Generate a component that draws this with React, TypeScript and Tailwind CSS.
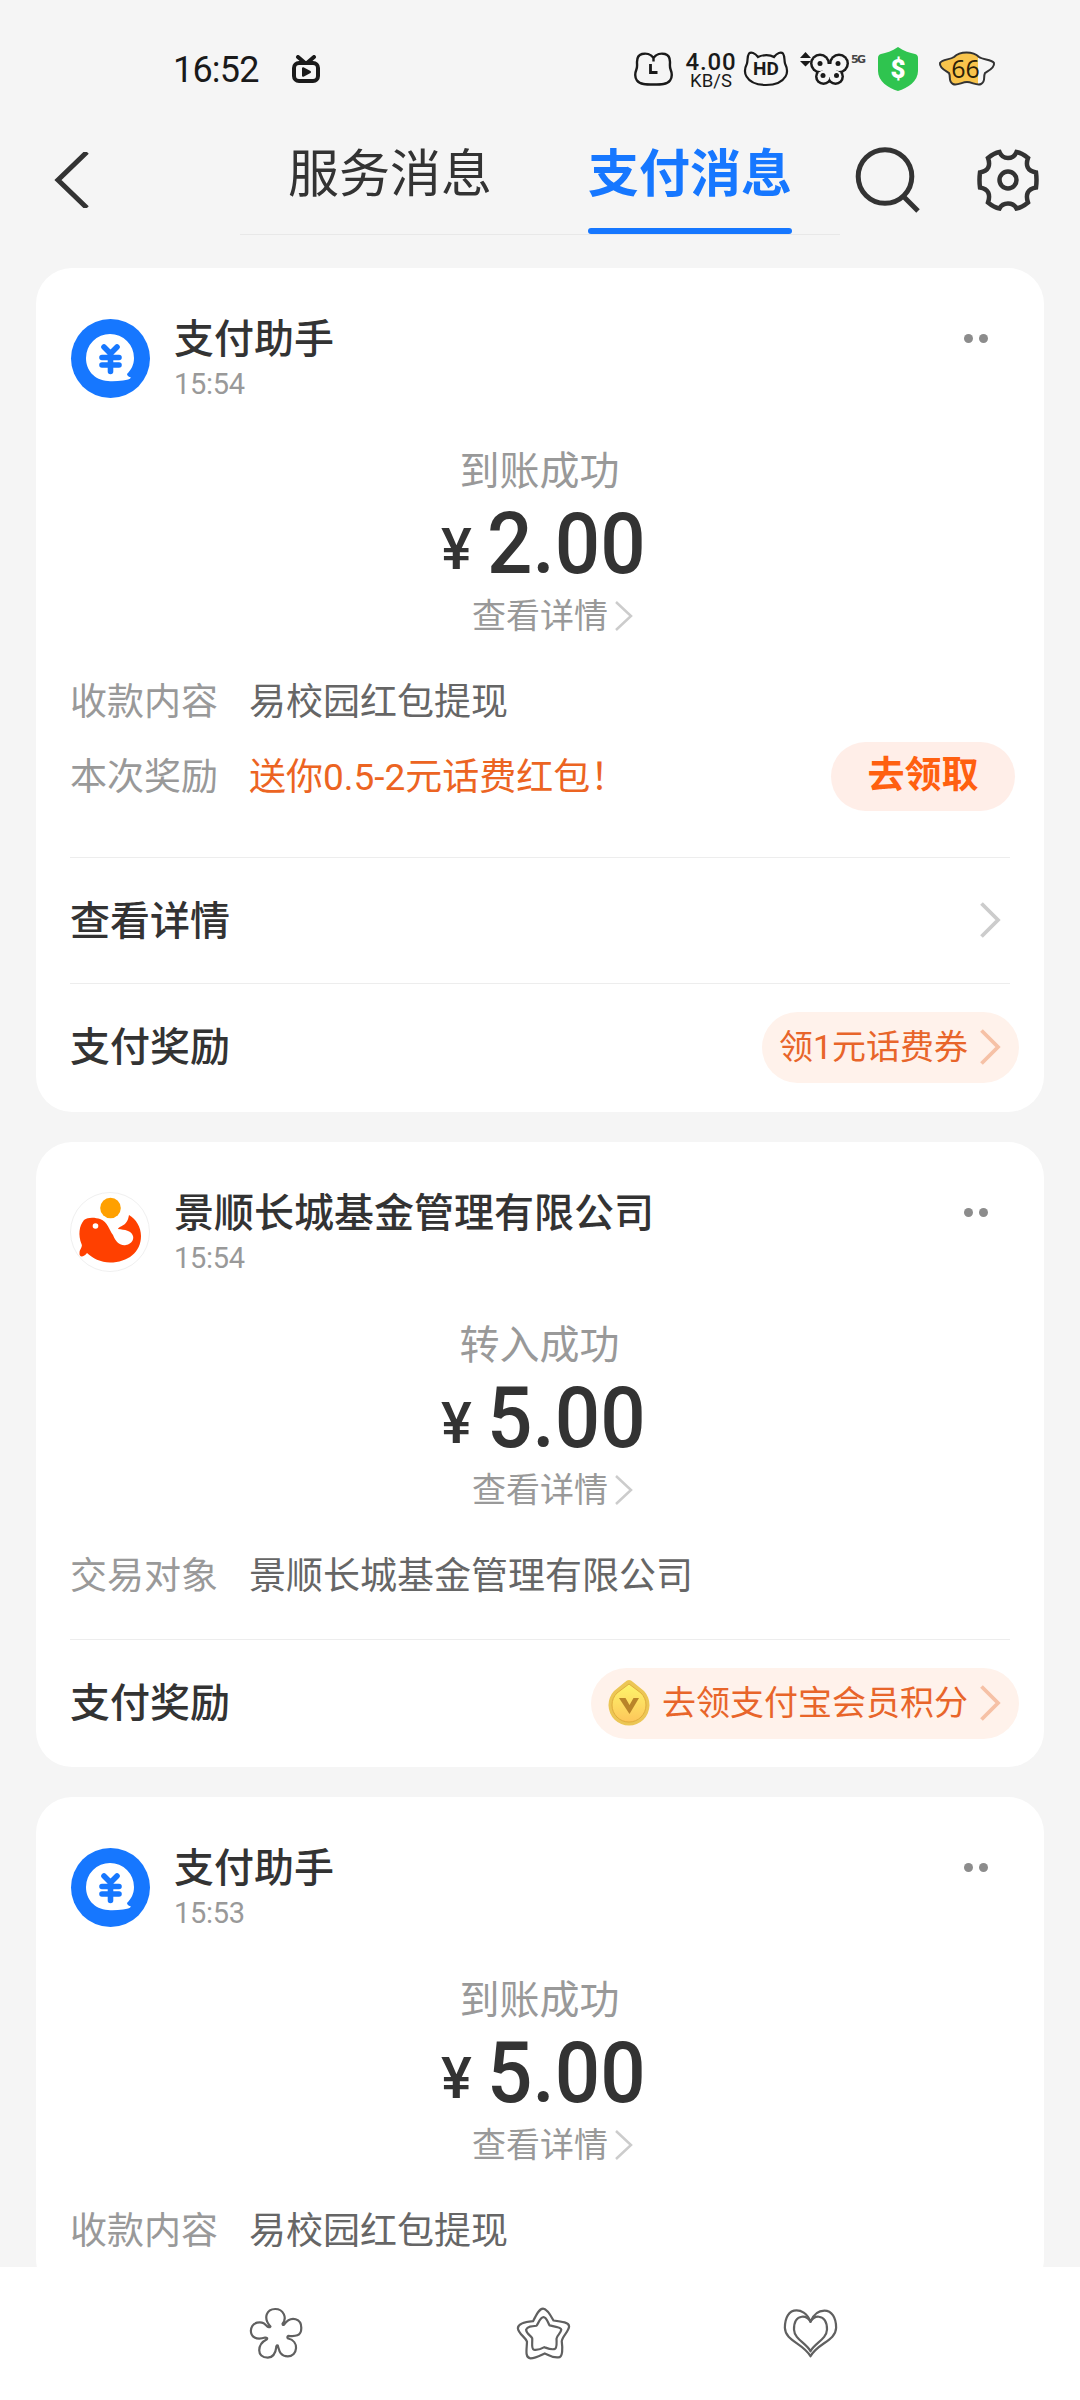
import type { ReactNode } from "react";

type Row = { label: string; value: string; highlight?: boolean; action?: string };
type Link = { title: string; pill?: string; coin?: boolean };
type Message = {
  sender: string;
  time: string;
  avatar: "pay" | "fund";
  status: string;
  amount: string;
  rows: Row[];
  links: Link[];
};

const messages: Message[] = [
  {
    sender: "支付助手",
    time: "15:54",
    avatar: "pay",
    status: "到账成功",
    amount: "2.00",
    rows: [
      { label: "收款内容", value: "易校园红包提现" },
      { label: "本次奖励", value: "送你0.5-2元话费红包！", highlight: true, action: "去领取" },
    ],
    links: [{ title: "查看详情" }, { title: "支付奖励", pill: "领1元话费券" }],
  },
  {
    sender: "景顺长城基金管理有限公司",
    time: "15:54",
    avatar: "fund",
    status: "转入成功",
    amount: "5.00",
    rows: [{ label: "交易对象", value: "景顺长城基金管理有限公司" }],
    links: [{ title: "支付奖励", pill: "去领支付宝会员积分", coin: true }],
  },
  {
    sender: "支付助手",
    time: "15:53",
    avatar: "pay",
    status: "到账成功",
    amount: "5.00",
    rows: [{ label: "收款内容", value: "易校园红包提现" }],
    links: [],
  },
];

const BATTERY =
  "M16 6c6-6 19-6 25 0 4 3 13 2 15 6 1 5-6 8-9 10-2 4 1 9-4 11-4 2-9-2-14-2s-10 4-14 2c-5-2-2-7-4-11C8 20 1 17 2 12c2-4 10-3 14-6z";

function StatusBar() {
  return (
    <div className="flex h-[110px] items-center pt-[28px] pl-[173px] text-[#1a1a1a]">
      <div className="flex w-[461px] items-center">
        <span className="mt-0.5 w-[119px] text-[36px] leading-[44px] tracking-[-0.8px]">16:52</span>
        <svg width="28" height="28" viewBox="0 0 28 28" fill="none" stroke="#1a1a1a" strokeWidth="4" strokeLinecap="round">
          <path d="M6 2l7 6M22 2l-7 6" />
          <rect x="2" y="8" width="24" height="18" rx="5" />
          <path d="M11 13.2v7.6l7-3.8z" fill="#1a1a1a" strokeWidth="2" strokeLinejoin="round" />
        </svg>
      </div>

      <svg className="mr-3" width="39" height="34" viewBox="0 0 39 34" fill="none" stroke="#1a1a1a" strokeWidth="2.4">
        <path d="M19.500 9.500V6C22 2 27 1 31 2c4 1 5 4 5 8 0 3-.5 5 .6 7.500C38 21 38.500 25 36 28.500 33 32.500 27 32.500 19.500 32.500S6 32.500 3 28.500C.5 25 1 21 2.400 17.500 3.500 15 3 13 3 10c0-4 1-7 5-8s9 0 11.500 4" />
        <path d="M16.500 12v8.500h7" strokeWidth="2.800" />
      </svg>

      <div className="mr-[6px] flex w-[52px] flex-col items-center pt-[3px]">
        <span className="text-[24px] font-medium leading-[20px] tracking-[0.8px]">4.00</span>
        <span className="text-[18.500px] leading-[18px]">KB/S</span>
      </div>

      <svg className="mr-[11px]" width="46" height="36" viewBox="0 0 46 36" fill="none" stroke="#1a1a1a" strokeWidth="2.200">
        <path d="M15 6c5-2.500 12-2.500 16 0C34 2 38 .5 40 2.500c2 3 1 6 2 10 2 4 3 9 .5 13C39 31.500 31 34 23 34S7 31.500 3.500 25.500C1 21.500 2 16.500 4 12.500c1-4 0-7 2-10C8 .5 12 2 15 6z" />
        <text x="23" y="24" textAnchor="middle" fontSize="19" fontWeight="700" fill="#1a1a1a" stroke="none" fontFamily="Roboto">
          HD
        </text>
      </svg>

      <svg className="mr-[11px]" width="67" height="36" viewBox="0 0 67 36">
        <path d="M0 7l5.500-6L11 7zM0 10h11L5.500 15.500z" fill="#1a1a1a" />
        <g fill="#1a1a1a">
          <circle cx="20" cy="12.500" r="10" />
          <circle cx="39" cy="12.500" r="10" />
          <circle cx="23.500" cy="25.500" r="8.500" />
          <circle cx="35.500" cy="25.500" r="8.500" />
        </g>
        <g fill="#f5f5f5">
          <circle cx="20" cy="12.500" r="7.500" />
          <circle cx="39" cy="12.500" r="7.500" />
          <circle cx="23.500" cy="25.500" r="6" />
          <circle cx="35.500" cy="25.500" r="6" />
          <path d="M22 13h15l-1 10-4 3h-5l-4-3z" />
        </g>
        <g fill="#1a1a1a">
          <circle cx="20" cy="12.500" r="2.500" />
          <circle cx="38" cy="12.500" r="2.500" />
          <circle cx="23" cy="24.500" r="2.500" />
          <circle cx="36.500" cy="24.500" r="2.500" />
        </g>
        <text x="51" y="12" fontSize="11" fontWeight="700" fill="#444" fontFamily="DejaVu Sans" textLength="15">
          5G
        </text>
      </svg>

      <svg className="mr-[20px]" width="40" height="44" viewBox="0 0 40 44">
        <path d="M20 0c6 4 12 6 17 7 2 .5 3 2 3 4v13c0 10-10 17-20 20C10 41 0 34 0 24V11c0-2 1-3.500 3-4 5-1 11-3 17-7z" fill="#2fc44f" />
        <text x="20" y="31" textAnchor="middle" fontSize="26" fontWeight="900" fill="#fff" fontFamily="Roboto">
          $
        </text>
      </svg>

      <svg width="58" height="36" viewBox="0 0 58 36">
        <defs>
          <clipPath id="charge">
            <rect width="40" height="36" />
          </clipPath>
        </defs>
        <path clipPath="url(#charge)" d={BATTERY} fill="#f8c44c" />
        <path d={BATTERY} fill="none" stroke="#333" strokeWidth="2" />
        <text x="27.500" y="27" textAnchor="middle" fontSize="25" fill="#2a2109" fontFamily="Open Sans">
          66
        </text>
      </svg>
    </div>
  );
}

function Header() {
  return (
    <div className="flex h-[158px] items-start">
      <svg className="mt-[42px] ml-[54px]" width="36" height="56" viewBox="0 0 36 56" fill="none" stroke="#333" strokeWidth="5">
        <path d="M33 0L4 28l29 28" />
      </svg>
      <div className="ml-[150px] flex h-[125px] w-[600px] border-b border-[#e8e8e8] text-[51px] leading-[70px]">
        <span className="mt-[30px] ml-[48px] w-[204px] text-[#333]">服务消息</span>
        <div className="ml-[96px] flex w-[204px] flex-col items-center justify-between font-bold text-[#1677ff]">
          <span className="mt-[30px]">支付消息</span>
          <span className="h-1.5 w-full rounded-full bg-[#1677ff]" />
        </div>
      </div>
      <svg className="mt-[36px] ml-[14px]" width="68" height="68" viewBox="0 0 68 68" fill="none" stroke="#333" strokeWidth="5">
        <circle cx="31" cy="30.500" r="26.800" />
        <path d="M50 51l14 14" />
      </svg>
      <svg className="mt-[38px] ml-[54px]" width="64" height="64" viewBox="-32 -32 64 64" fill="none" stroke="#333" strokeWidth="4.500">
        <path d="M-8.500-28C-6.500-23-3.500-22 0-22S6.500-23 8.500-28Q14-27 20-22C17.500-15 19-9 28-7.500Q29 0 28 7.500C19 9 17.500 15 20 22.500Q14 27.500 8.500 28.500C6.500 24.500 3.500 23.500 0 23.500S-6.500 24.500-8.500 28.500Q-14 27.500-20 22.500C-17.500 15-19 9-28 7.500Q-29 0-28-7.500C-19-9-17.500-15-20-22Q-14-27-8.500-28Z" />
        <circle r="8.500" />
      </svg>
    </div>
  );
}

function PayAvatar() {
  return (
    <svg width="80" height="80" viewBox="0 0 80 80">
      <circle cx="40.500" cy="40.500" r="39.500" fill="#1677ff" />
      <path d="M40 16a24 24 0 0 1 24 24c0 7-3 12-7 16 0 2 2 3 4 3.500-1 2-4 2.500-8 3-5 .5-10 1-15 .5C24 62 16 52 16 40a24 24 0 0 1 24-24z" fill="#fff" />
      <path d="M34 29l6.500 6.500L47 29M32 39.500h17M32 47h17M40.500 36v17.500" fill="none" stroke="#1677ff" strokeWidth="5.600" strokeLinecap="round" />
    </svg>
  );
}

function FundAvatar() {
  return (
    <svg width="80" height="80" viewBox="0 0 80 80">
      <circle cx="40" cy="40" r="39.500" fill="#fff" stroke="#f0f0f0" />
      <circle cx="40.500" cy="16" r="10.300" fill="#ffa000" />
      <path
        d="M14 28C18 24.500 26 25.500 30 27 38 30 39 38 43 43 46 51 51 54 56 53 62 52 64 47 63 44 61 38 55 38 48 37 50 33 57 35 59 23 66 27 71 35 71 44 71 60 58 70.500 40 70.500 31 70.500 22 66 17 61 14 65 9 66 9.500 61 9.500 57 13 55 11.500 52 8 43 9 34 14 28Z"
        fill="#ff4000"
      />
      <circle cx="25.500" cy="34" r="2.800" fill="#fff" />
    </svg>
  );
}

function Coin() {
  return (
    <svg className="mr-3" width="42" height="46" viewBox="0 0 42 46">
      <defs>
        <linearGradient id="coin" x1="0" y1="0" x2="0" y2="1">
          <stop offset="0" stopColor="#fdf56a" />
          <stop offset="1" stopColor="#fdc65a" />
        </linearGradient>
      </defs>
      <path d="M21 0q2 0 4 2l11 9a20.500 20.500 0 1 1-30 0l11-9q2-2 4-2z" fill="#ecc655" />
      <path d="M21 4l12 9a17 17 0 1 1-24 0z" fill="url(#coin)" stroke="#e0ad3c" />
      <path d="M11 18h6.500l4 7 4-7H31L21.500 34z" fill="#b98429" />
    </svg>
  );
}

function Chevron({ className, small }: { className: string; small?: boolean }) {
  return small ? (
    <svg className={className} width="18" height="30" viewBox="0 0 18 30" fill="none" stroke="currentColor" strokeWidth="2.500">
      <path d="M1 1l15 14L1 29" />
    </svg>
  ) : (
    <svg className={className} width="21" height="36" viewBox="0 0 21 36" fill="none" stroke="currentColor" strokeWidth="3.800">
      <path d="M1.500 1.500L18 18 1.500 34.500" />
    </svg>
  );
}

function MessageCard({ message }: { message: Message }) {
  return (
    <div className="shrink-0 rounded-[36px] bg-white pb-px last:grow">
      <div className="flex items-start pt-[50px] pl-[34px]">
        {message.avatar === "pay" ? <PayAvatar /> : <FundAvatar />}
        <div className="ml-6 flex flex-1 flex-col">
          <span className="text-[40px] font-medium leading-[44px] text-[#333]">{message.sender}</span>
          <span className="text-[29px] leading-[45px] tracking-[-0.3px] text-[#999]">{message.time}</span>
        </div>
        <div className="mt-4 mr-[56px] flex gap-1.5">
          <i className="size-[9px] rounded-full bg-[#8c8c8c]" />
          <i className="size-[9px] rounded-full bg-[#8c8c8c]" />
        </div>
      </div>

      <div className="mt-[37px] flex flex-col items-center">
        <span className="-ml-px text-[40px] leading-[56px] text-[#999]">{message.status}</span>
        <div className="flex h-[88px] items-baseline pl-[3px] text-[#333]">
          <span className="relative -top-1 mr-[15px] text-[58px] font-medium leading-[88px]">¥</span>
          <span className="w-[155px] origin-left scale-x-[0.93] text-[86px] font-medium leading-[88px]">{message.amount}</span>
        </div>
        <div className="flex h-[56px] items-center pb-px pl-[25px]">
          <span className="text-[34px] leading-[48px] text-[#999]">查看详情</span>
          <Chevron small className="ml-[7px] text-[#ccc]" />
        </div>
      </div>

      <div className="mt-[21px] pr-[29px] pl-[34px]">
        {message.rows.map((row) => (
          <div key={row.label} className="flex h-[75px] items-center text-[37px]">
            <span className="mr-[31px] text-[#999]">{row.label}</span>
            <span className={row.highlight ? "flex-1 text-[#ec6422]" : "flex-1 text-[#666]"}>{row.value}</span>
            {row.action && (
              <span className="mb-0.5 h-[69px] w-[184px] rounded-full bg-[#ffeee8] text-center text-[37px] font-bold leading-[67px] text-[#ff6010]">
                {row.action}
              </span>
            )}
          </div>
        ))}
      </div>

      <div className={message.rows.length > 1 ? "pt-[42px] pb-px" : "pt-[25px]"}>
        {message.links.map((link) => (
          <div
            key={link.title}
            className="mx-[34px] flex h-[126px] items-center justify-between border-t border-[#ededed] last:h-[127px]"
          >
            <span className="pt-0.5 text-[40px] font-medium text-[#333]">{link.title}</span>
            {link.pill ? (
              <span className="-mr-[9px] flex h-[71px] items-center rounded-full bg-[#fff2eb] pr-[18px] pl-[17px] text-[34px] text-[#e8652a]">
                {link.coin && <Coin />}
                <span className="pt-px">{link.pill}</span>
                <Chevron className="ml-[12px] text-[#f6c1a6]" />
              </span>
            ) : (
              <Chevron className="mr-[9px] mb-[2px] text-[#ccc]" />
            )}
          </div>
        ))}
      </div>
    </div>
  );
}

function NavIcon({ viewBox, children }: { viewBox: string; children: ReactNode }) {
  return (
    <svg
      className="overflow-visible"
      width="53"
      height="51"
      viewBox={viewBox}
      preserveAspectRatio="none"
      fill="none"
      stroke="#606060"
      strokeWidth="2.200"
      strokeLinejoin="round"
    >
      {children}
    </svg>
  );
}

function BottomNav() {
  return (
    <div className="z-10 flex h-[133px] items-center justify-between bg-white pr-[243px] pl-[250px]">
      <NavIcon viewBox="116 146 122 152">
        <path
          vectorEffect="non-scaling-stroke"
          d="M163 201C145 175 155 149 174 149S202 175 191 193Q191 198 194 196C212 165 235 180 234 207 234 230 220 231 204 229Q200 233 204 237C230 245 226 290 203 290 184 290 183 270 180 258Q177 256 177 260C175 280 170 294 157 294 130 294 132 254 155 239Q157 235 151 234C130 243 118 232 118 214 119 188 143 180 155 200Q160 206 163 201Z"
        />
      </NavIcon>
      <NavIcon viewBox="731 144 122 155">
        <path
          vectorEffect="non-scaling-stroke"
          d="M768 184C775 165 782 146 791 146S808 165 815 182C835 185 851 188 851 200 850 216 835 230 834 245 836 265 837 294 826 294 812 296 803 286 795 282 785 288 775 297 762 297 748 296 754 265 754 246 750 232 734 222 733 205 734 190 750 186 768 184Z"
        />
        <path
          vectorEffect="non-scaling-stroke"
          d="M776 198C781 188 785 172 792 172S802 188 806 197C815 200 833 202 833 210 832 221 823 227 822 237 822 250 824 268 817 269 807 271 800 266 794 263 786 269 778 273 770 271 763 268 767 248 766 236 763 228 752 222 752 210 755 200 765 199 776 198Z"
        />
      </NavIcon>
      <NavIcon viewBox="1347 146 122 152">
        <path
          vectorEffect="non-scaling-stroke"
          d="M1408 187C1400 160 1385 153 1376 153 1358 153 1349 175 1349 205 1350 245 1390 250 1408 290 1424 250 1466 245 1467 205 1467 175 1457 154 1440 154 1425 154 1415 165 1408 187Z"
        />
        <path
          vectorEffect="non-scaling-stroke"
          d="M1408 187C1403 175 1395 171 1388 172 1374 174 1370 190 1370 210 1371 240 1398 250 1408 275 1418 250 1445 240 1446 210 1446 190 1440 174 1427 172 1418 171 1412 178 1408 187Z"
        />
      </NavIcon>
    </div>
  );
}

export default function App() {
  return (
    <div className="flex h-[2400px] w-[1080px] flex-col overflow-hidden bg-[#f5f5f5] font-['Roboto','Noto_Sans_CJK_SC',sans-serif]">
      <StatusBar />
      <Header />
      <div className="flex min-h-0 flex-1 flex-col gap-[30px] overflow-hidden px-9">
        {messages.map((message) => (
          <MessageCard key={message.sender + message.time} message={message} />
        ))}
      </div>
      <BottomNav />
    </div>
  );
}
